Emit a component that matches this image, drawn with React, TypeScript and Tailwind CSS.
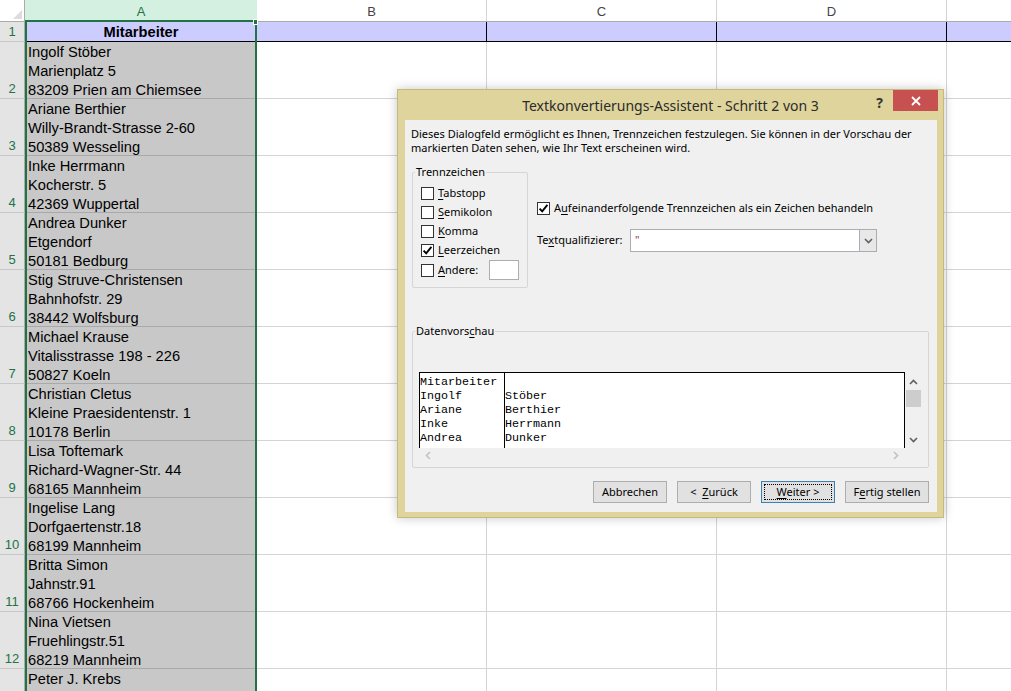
import React from "react";

const data: string[][] = [
  ["Ingolf Stöber", "Marienplatz 5", "83209 Prien am Chiemsee"],
  ["Ariane Berthier", "Willy-Brandt-Strasse 2-60", "50389 Wesseling"],
  ["Inke Herrmann", "Kocherstr. 5", "42369 Wuppertal"],
  ["Andrea Dunker", "Etgendorf", "50181 Bedburg"],
  ["Stig Struve-Christensen", "Bahnhofstr. 29", "38442 Wolfsburg"],
  ["Michael Krause", "Vitalisstrasse 198 - 226", "50827 Koeln"],
  ["Christian Cletus", "Kleine Praesidentenstr. 1", "10178 Berlin"],
  ["Lisa Toftemark", "Richard-Wagner-Str. 44", "68165 Mannheim"],
  ["Ingelise Lang", "Dorfgaertenstr.18", "68199 Mannheim"],
  ["Britta Simon", "Jahnstr.91", "68766 Hockenheim"],
  ["Nina Vietsen", "Fruehlingstr.51", "68219 Mannheim"],
];

function U({ children }: { children: React.ReactNode }) {
  return <span className="underline decoration-1 underline-offset-[2px]">{children}</span>;
}

function Box({ checked }: { checked?: boolean }) {
  return (
    <span className="w-[13px] h-[13px] border border-[#333333] bg-white flex items-center justify-center shrink-0">
      {checked && (
        <svg width="11" height="11" viewBox="0 0 11 11">
          <path d="M1.6 5.6 L4.2 8.4 L9.4 1.8" fill="none" stroke="#000" strokeWidth="1.9" />
        </svg>
      )}
    </span>
  );
}

function DataRow({ n, lines }: { n: number; lines: string[] }) {
  return (
    <div className="flex h-[57px] shrink-0">
      <div className="w-[25px] shrink-0 bg-[#e4e4e4] border-r border-b border-r-[#ababab] border-b-[#c8c8c8] flex items-end justify-center text-[#217346] text-[13px] leading-[19px]">
        {n}
      </div>
      <div className="w-[232px] shrink-0 bg-[#c8c8c8] border-b border-r border-[#a9a9a9] pl-[3px] pt-[1px] text-[14.67px] leading-[19px] text-black overflow-hidden whitespace-nowrap">
        {lines.map((l) => (
          <div key={l}>{l}</div>
        ))}
      </div>
      <div className="w-[230px] shrink-0 border-b border-r border-[#d4d4d4]" />
      <div className="w-[230px] shrink-0 border-b border-r border-[#d4d4d4]" />
      <div className="w-[230px] shrink-0 border-b border-r border-[#d4d4d4]" />
      <div className="flex-1 border-b border-[#d4d4d4]" />
    </div>
  );
}

function Btn({ children, def, w }: { children: React.ReactNode; def?: boolean; w: string }) {
  if (def) {
    return (
      <div className={`${w} h-[22px] border border-[#3c7fb1] bg-[#e1e1e1] p-[2px]`}>
        <div className="w-full h-full border border-dotted border-black flex items-center justify-center">
          <span className="whitespace-pre">{children}</span>
        </div>
      </div>
    );
  }
  return (
    <div className={`${w} h-[22px] border border-[#adadad] bg-[#e1e1e1] flex items-center justify-center`}>
      <span className="whitespace-pre">{children}</span>
    </div>
  );
}

export default function App() {
  return (
    <div className="relative w-[1011px] h-[691px] overflow-hidden bg-white font-['Liberation_Sans',Arial,sans-serif]">
      {/* column headers */}
      <div className="flex h-[22px] border-b border-[#ababab]">
        <div className="w-[25px] shrink-0 border-r border-[#ababab] bg-white relative flex items-end justify-end pr-[2px] pb-[2px]">
          <svg width="9" height="9" viewBox="0 0 9 9">
            <path d="M9 0 L9 9 L0 9 Z" fill="#dcdcdc" />
          </svg>
        </div>
        <div className="w-[232px] shrink-0 bg-[#d3f0e0] text-[#217346] text-[13px] flex items-center justify-center pt-[3px]">
          A
        </div>
        <div className="w-[230px] shrink-0 border-r border-[#d4d4d4] text-[#444] text-[13px] flex items-center justify-center pt-[3px]">
          B
        </div>
        <div className="w-[230px] shrink-0 border-r border-[#d4d4d4] text-[#444] text-[13px] flex items-center justify-center pt-[3px]">
          C
        </div>
        <div className="w-[230px] shrink-0 border-r border-[#d4d4d4] text-[#444] text-[13px] flex items-center justify-center pt-[3px]">
          D
        </div>
        <div className="flex-1" />
      </div>

      {/* row 1 */}
      <div className="flex h-[20px]">
        <div className="w-[25px] shrink-0 bg-[#e4e4e4] border-r border-b border-r-[#ababab] border-b-[#c8c8c8] flex items-center justify-center text-[#217346] text-[13px]">
          1
        </div>
        <div className="w-[232px] shrink-0 bg-[#ccccff] border-b border-black flex items-center justify-center font-bold text-[14.67px] text-black">
          Mitarbeiter
        </div>
        <div className="w-[230px] shrink-0 bg-[#ccccff] border-b border-r border-black" />
        <div className="w-[230px] shrink-0 bg-[#ccccff] border-b border-r border-black" />
        <div className="w-[230px] shrink-0 bg-[#ccccff] border-b border-r border-black" />
        <div className="flex-1 bg-[#ccccff] border-b border-black" />
      </div>

      {data.map((lines, i) => (
        <DataRow key={i} n={i + 2} lines={lines} />
      ))}

      {/* row 13 partial */}
      <div className="flex h-[57px]">
        <div className="w-[25px] shrink-0 bg-[#e4e4e4] border-r border-[#ababab]" />
        <div className="w-[232px] shrink-0 bg-[#c8c8c8] border-r border-[#a9a9a9] pl-[3px] pt-[1px] text-[14.67px] leading-[19px] text-black whitespace-nowrap">
          Peter J. Krebs
        </div>
        <div className="w-[230px] shrink-0 border-r border-[#d4d4d4]" />
        <div className="w-[230px] shrink-0 border-r border-[#d4d4d4]" />
        <div className="w-[230px] shrink-0 border-r border-[#d4d4d4]" />
        <div className="flex-1" />
      </div>

      {/* selection outline */}
      <div className="absolute left-[25px] top-[20px] w-[232px] h-[700px] border-2 border-[#217346] pointer-events-none" />
      <div className="absolute left-[253px] top-[19px] w-[5px] h-[6px] bg-[#217346] border border-white" />

      {/* dialog */}
      <div className="absolute left-[397px] top-[89px] w-[547px] h-[429px] bg-[#dfd49c] border border-[#c5b97c] shadow-[0_0_10px_rgba(0,0,0,0.22)] flex flex-col font-['Noto_Sans',sans-serif] text-[11px] text-black">
        <div className="relative h-[30px] shrink-0 flex items-center justify-center">
          <span className="text-[14px] text-[#2b2b2b] pt-[1px]">Textkonvertierungs-Assistent - Schritt 2 von 3</span>
          <span className="absolute right-[60px] top-[2px] text-[14px] font-bold text-[#333]">?</span>
          <div className="absolute right-[5px] top-0 w-[45px] h-[21px] bg-[#c75050] flex items-center justify-center">
            <svg width="10" height="10" viewBox="0 0 10 10">
              <path d="M1 1 L9 9 M9 1 L1 9" stroke="#fff" strokeWidth="1.8" />
            </svg>
          </div>
        </div>

        <div className="ml-[7px] w-[532px] h-[392px] bg-[#f0f0f0] flex flex-col">
          <p className="ml-[6px] mt-[7px] leading-[14px] whitespace-nowrap">
            Dieses Dialogfeld ermöglicht es Ihnen, Trennzeichen festzulegen. Sie können in der Vorschau der
            <br />
            markierten Daten sehen, wie Ihr Text erscheinen wird.
          </p>

          <div className="flex mt-[10px] ml-[7px]">
            <fieldset className="w-[116px] h-[123px] border border-[#d5d5d5] rounded-[2px]">
              <legend className="ml-[2px] px-[1px] leading-[14px]">Trennzeichen</legend>
              <div className="pl-[8px] pt-[5px] flex flex-col">
                <div className="flex items-center h-[19px]">
                  <Box />
                  <span className="ml-[4px]"><U>T</U>abstopp</span>
                </div>
                <div className="flex items-center h-[19px]">
                  <Box />
                  <span className="ml-[4px]"><U>S</U>emikolon</span>
                </div>
                <div className="flex items-center h-[19px]">
                  <Box />
                  <span className="ml-[4px]"><U>K</U>omma</span>
                </div>
                <div className="flex items-center h-[19px]">
                  <Box checked />
                  <span className="ml-[4px]"><U>L</U>eerzeichen</span>
                </div>
                <div className="flex items-center h-[20px]">
                  <Box />
                  <span className="ml-[4px] w-[51px]"><U>A</U>ndere:</span>
                  <div className="w-[30px] h-[20px] border border-[#abadb3] bg-white" />
                </div>
              </div>
            </fieldset>

            <div className="ml-[9px] pt-[35px] flex flex-col">
              <div className="flex items-center h-[16px]">
                <Box checked />
                <span className="ml-[4px]">A<U>u</U>feinanderfolgende Trennzeichen als ein Zeichen behandeln</span>
              </div>
              <div className="flex items-center mt-[13px]">
                <span className="w-[93px]">Te<U>x</U>tqualifizierer:</span>
                <div className="w-[247px] h-[23px] border border-[#abadb3] bg-white flex">
                  <span className="flex-1 pl-[4px] pt-[1px] text-[#8b3a2e] leading-[18px]">"</span>
                  <div className="w-[17px] h-full border-l border-[#abadb3] bg-[#e8e8e8] flex items-center justify-center">
                    <svg width="9" height="6" viewBox="0 0 9 6">
                      <path d="M1 1 L4.5 4.5 L8 1" fill="none" stroke="#606060" strokeWidth="1.6" />
                    </svg>
                  </div>
                </div>
              </div>
            </div>
          </div>

          <fieldset className="mt-[36px] ml-[7px] w-[517px] h-[144px] border border-[#d5d5d5] rounded-[2px]">
            <legend className="ml-[2px] px-[1px] leading-[14px]">
              Datenvors<U>c</U>hau
            </legend>
            <div className="pl-[6px] pt-[34px] flex flex-col">
              <div className="flex">
                <div className="w-[486px] h-[76px] border-t border-l border-r border-black bg-white flex overflow-hidden font-['Liberation_Mono',monospace] text-[11.7px] leading-[14px] text-black">
                  <div className="w-[85px] h-full border-r border-black pt-[2px]">
                    <div>Mitarbeiter</div>
                    <div>Ingolf</div>
                    <div>Ariane</div>
                    <div>Inke</div>
                    <div>Andrea</div>
                  </div>
                  <div className="flex-1 pt-[2px]">
                    <div>&nbsp;</div>
                    <div>Stöber</div>
                    <div>Berthier</div>
                    <div>Herrmann</div>
                    <div>Dunker</div>
                  </div>
                </div>
                <div className="w-[16px] h-[76px] flex flex-col items-center">
                  <svg className="mt-[7px]" width="9" height="6" viewBox="0 0 9 6">
                    <path d="M1 5 L4.5 1.5 L8 5" fill="none" stroke="#606060" strokeWidth="1.6" />
                  </svg>
                  <div className="mt-[5px] w-[15px] h-[17px] bg-[#cdcdcd]" />
                  <svg className="mt-[30px]" width="9" height="6" viewBox="0 0 9 6">
                    <path d="M1 1 L4.5 4.5 L8 1" fill="none" stroke="#606060" strokeWidth="1.6" />
                  </svg>
                </div>
              </div>
              <div className="w-[486px] h-[15px] flex items-center justify-between px-[6px]">
                <svg width="6" height="9" viewBox="0 0 6 9">
                  <path d="M5 1 L1.5 4.5 L5 8" fill="none" stroke="#c2c2c2" strokeWidth="1.6" />
                </svg>
                <svg width="6" height="9" viewBox="0 0 6 9">
                  <path d="M1 1 L4.5 4.5 L1 8" fill="none" stroke="#c2c2c2" strokeWidth="1.6" />
                </svg>
              </div>
            </div>
          </fieldset>

          <div className="flex justify-end gap-[10px] mt-[13px] mr-[8px]">
            <Btn w="w-[74px]">Abbrechen</Btn>
            <Btn w="w-[74px]">
              {"<  "}
              <U>Z</U>urück
            </Btn>
            <Btn w="w-[74px]" def>
              <U>W</U>
              {"eiter >"}
            </Btn>
            <Btn w="w-[84px]">
              F<U>e</U>rtig stellen
            </Btn>
          </div>
        </div>
      </div>
    </div>
  );
}
